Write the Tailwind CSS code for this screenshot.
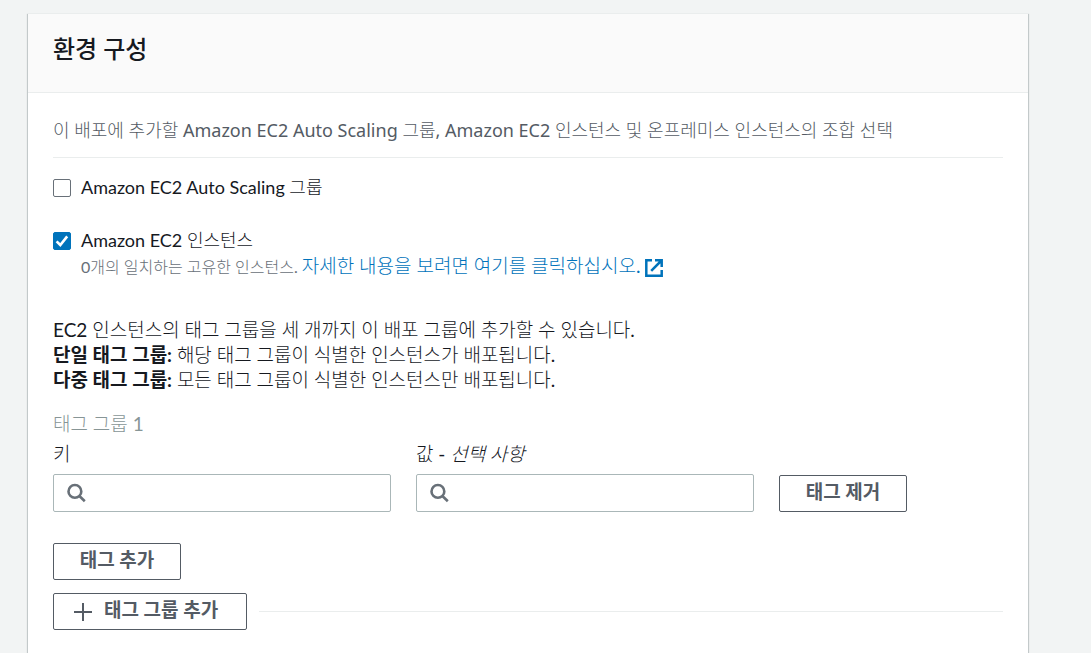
<!DOCTYPE html>
<html lang="ko">
<head>
  <meta charset="UTF-8">
  <meta name="viewport" content="width=device-width, initial-scale=1.0">
  <title>환경 구성</title>
  <script src="https://cdn.jsdelivr.net/npm/@tailwindcss/browser@4"></script>
</head>
<body class="bg-[#f2f4f4] font-['Lato','Noto_Sans_CJK_KR_Light','Noto_Sans_CJK_KR_DemiLight','Noto_Sans_CJK_KR',sans-serif] text-[18px] leading-[25px] text-[#16191f]">
  <main class="min-h-screen pt-[13px] pl-7 pr-[63px] flex flex-col">
    <section class="flex-1 bg-white border-t border-[#eaeded] shadow-[0_1px_1px_0_#001c244d,1px_1px_1px_0_#001c2426,-1px_1px_1px_0_#001c2426]">
      <!-- Header -->
      <header class="h-[79px] px-[25px] pt-[19px] bg-[#fafafa] border-b border-[#eaeded]">
        <h1 class="font-['Lato','Noto_Sans_CJK_KR',sans-serif] text-[24px] leading-[32px] font-medium">환경 구성</h1>
      </header>

      <div class="px-[25px] pt-[25px] pb-6">
        <p class="pb-[14px] border-b border-[#eaeded] font-['Noto_Sans','Noto_Sans_CJK_KR_Light','Noto_Sans_CJK_KR_DemiLight','Noto_Sans_CJK_KR',sans-serif] text-[#545b64]">이 배포에 추가할 Amazon EC2 Auto Scaling 그룹, Amazon EC2 인스턴스 및 온프레미스 인스턴스의 조합 선택</p>

        <!-- Instance types -->
        <div class="mt-[17px] flex items-center gap-[10px]">
          <input id="asg" type="checkbox" class="size-[18px] appearance-none rounded-xs border border-[#687078] bg-white checked:border-[#0073bb] checked:bg-[#0073bb]">
          <label for="asg">Amazon EC2 Auto Scaling 그룹</label>
        </div>
        <div class="mt-7 flex items-center gap-[10px]">
          <span class="grid size-[18px]">
            <input id="ec2" type="checkbox" checked class="peer col-start-1 row-start-1 size-[18px] appearance-none rounded-xs border border-[#687078] bg-white checked:border-[#0073bb] checked:bg-[#0073bb]">
            <svg class="pointer-events-none col-start-1 row-start-1 hidden size-[18px] peer-checked:block" viewBox="0 0 18 18" fill="none" stroke="#fff" stroke-width="2.6"><path d="M3.6 9.4 7.3 13 14.2 4.4"/></svg>
          </span>
          <label for="ec2">Amazon EC2 인스턴스</label>
        </div>
        <p class="pl-7 text-[16px] text-[#687078]">0개의 일치하는 고유한 인스턴스.
          <a href="#" class="text-[19px] text-[#0073bb]">자세한 내용을 보려면 여기를 클릭하십시오.
            <svg class="inline size-[18px]" viewBox="0 0 18 18" fill="none" stroke="currentColor" stroke-width="2.5"><path d="M7 1.3H1.3v15.4h15.4V11"/><path d="M10 1.3h6.7V8M16.5 1.5 6.2 11.8"/></svg></a>
        </p>

        <!-- Tag group help -->
        <div class="mt-[38px] text-[19px]">
          <p>EC2 인스턴스의 태그 그룹을 세 개까지 이 배포 그룹에 추가할 수 있습니다.</p>
          <p><b class="font-['Lato','Noto_Sans_CJK_KR',sans-serif]">단일 태그 그룹:</b> 해당 태그 그룹이 식별한 인스턴스가 배포됩니다.</p>
          <p><b class="font-['Lato','Noto_Sans_CJK_KR',sans-serif]">다중 태그 그룹:</b> 모든 태그 그룹이 식별한 인스턴스만 배포됩니다.</p>
        </div>

        <!-- Tag group 1 -->
        <h2 class="mt-[19px] text-[19px] text-[#879596]">태그 그룹 1</h2>
        <div class="mt-[5px] grid grid-cols-[338fr_338fr_224fr] items-end gap-[25px]">
          <div>
            <label for="key" class="block text-[19px]">키</label>
            <div class="mt-2 flex h-[38px] items-center rounded-xs border border-[#aab7b8] bg-white pl-[13px]">
              <svg class="size-5 shrink-0" viewBox="0 0 20 20" fill="none" stroke="#687078" stroke-width="2.6"><circle cx="7.9" cy="8.4" r="6.4"/><path d="m12.4 13 5.4 5.2"/></svg>
              <input id="key" type="text" class="h-full min-w-0 flex-1 px-2 outline-none">
            </div>
          </div>
          <div>
            <label for="value" class="block text-[19px]">값 - <i>선택 사항</i></label>
            <div class="mt-2 flex h-[38px] items-center rounded-xs border border-[#aab7b8] bg-white pl-[13px]">
              <svg class="size-5 shrink-0" viewBox="0 0 20 20" fill="none" stroke="#687078" stroke-width="2.6"><circle cx="7.9" cy="8.4" r="6.4"/><path d="m12.4 13 5.4 5.2"/></svg>
              <input id="value" type="text" class="h-full min-w-0 flex-1 px-2 outline-none">
            </div>
          </div>
          <div>
            <button type="button" class="block h-[37px] w-32 rounded-xs border border-[#545b64] bg-white pb-1 font-['Lato','Noto_Sans_CJK_KR',sans-serif] text-[19px] font-bold text-[#545b64]">태그 제거</button>
          </div>
        </div>

        <button type="button" class="mt-[31px] block h-[37px] w-32 rounded-xs border border-[#545b64] bg-white pb-1 font-['Lato','Noto_Sans_CJK_KR',sans-serif] text-[19px] font-bold text-[#545b64]">태그 추가</button>
        <div class="mt-[13px] flex items-center gap-3">
          <button type="button" class="flex h-[37px] items-center gap-3 rounded-xs border border-[#545b64] bg-white pr-7 pl-5 font-['Lato','Noto_Sans_CJK_KR',sans-serif] text-[19px] font-bold text-[#545b64]">
            <svg class="size-[18px]" viewBox="0 0 18 18" fill="none" stroke="currentColor" stroke-width="2"><path d="M9 0v18M0 9h18"/></svg>
            <span class="pb-1">태그 그룹 추가</span>
          </button>
          <hr class="flex-1 border-[#eaeded]">
        </div>
      </div>
    </section>
  </main>
</body>
</html>
